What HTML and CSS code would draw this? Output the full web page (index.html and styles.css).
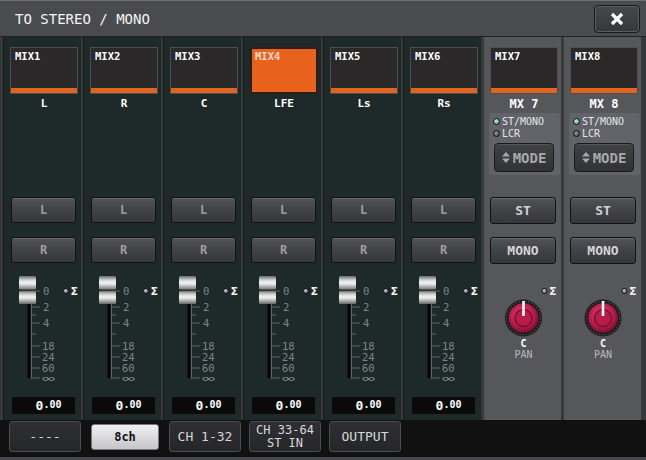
FILE: index.html
```html
<!DOCTYPE html>
<html>
<head>
<meta charset="utf-8">
<link rel="stylesheet" href="styles.css">
</head>
<body>
<svg class="defs" width="0" height="0">
  <defs>
    <linearGradient id="capg" x1="0" y1="0" x2="0" y2="1">
      <stop offset="0" stop-color="#6a6a6a"/>
      <stop offset="0.3" stop-color="#d6d6d6"/>
      <stop offset="0.5" stop-color="#f4f4f4"/>
      <stop offset="0.72" stop-color="#bcbcbc"/>
      <stop offset="1" stop-color="#666"/>
    </linearGradient>
    <radialGradient id="ledg" cx="0.4" cy="0.4" r="0.6">
      <stop offset="0" stop-color="#d8d8d8"/>
      <stop offset="1" stop-color="#4a4a4a"/>
    </radialGradient>
    <radialGradient id="knobg" cx="0.45" cy="0.4" r="0.6">
      <stop offset="0" stop-color="#e4457a"/>
      <stop offset="0.6" stop-color="#c0204f"/>
      <stop offset="1" stop-color="#7c0e2e"/>
    </radialGradient>
  </defs>
</svg>
<div class="screen">
  <div class="titlebar">
    <span class="title">TO STEREO / MONO</span>
    <div class="close"><svg width="14" height="14" viewBox="0 0 14 14"><path d="M2 2L12 12M12 2L2 12" stroke="#fff" stroke-width="3.2"/></svg></div>
  </div>
  <div class="frame">
    <div class="strip">
      <div class="mix"><span class="mix-name">MIX1</span><span class="mix-bar"></span></div>
      <div class="chlabel">L</div>
      <div class="btns"><div class="btn">L</div><div class="btn">R</div></div>
      <svg class="fader" width="78" height="116" viewBox="0 0 78 116">
        <path d="M28.5 21V108M28 37h9M28 53h9M28 76h9M28 87h9M28 98h9M28 108h9M28 45h5M28 64h5M33 21h4" stroke="#5e6767" stroke-width="1" fill="none"/>
        <rect x="24.5" y="34" width="3" height="74" fill="#060606"/>
        <rect x="16" y="6" width="17" height="14" rx="1.5" fill="url(#capg)"/>
        <rect x="16" y="20.5" width="17" height="13.5" rx="1.5" fill="url(#capg)"/>
        <path d="M16 20.2h17" stroke="#2a2a2a" stroke-width="1.2"/>
        <text class="sc" x="40" y="21">0</text><text class="sc" x="40" y="37">2</text><text class="sc" x="40" y="53">4</text>
        <text class="sc" x="39" y="76">18</text><text class="sc" x="39" y="87">24</text><text class="sc" x="39" y="97.5">60</text>
        <text class="sc inf" x="39" y="108.5" textLength="13" lengthAdjust="spacingAndGlyphs">∞</text>
        <circle cx="63" cy="21" r="2.6" fill="url(#ledg)" stroke="#0c0c0c" stroke-width="0.8"/>
        <text class="sig" x="67.5" y="21">Σ</text>
      </svg>
      <div class="value">0<small>.00</small></div>
    </div>
    <div class="strip">
      <div class="mix"><span class="mix-name">MIX2</span><span class="mix-bar"></span></div>
      <div class="chlabel">R</div>
      <div class="btns"><div class="btn">L</div><div class="btn">R</div></div>
      <svg class="fader" width="78" height="116" viewBox="0 0 78 116">
        <path d="M28.5 21V108M28 37h9M28 53h9M28 76h9M28 87h9M28 98h9M28 108h9M28 45h5M28 64h5M33 21h4" stroke="#5e6767" stroke-width="1" fill="none"/>
        <rect x="24.5" y="34" width="3" height="74" fill="#060606"/>
        <rect x="16" y="6" width="17" height="14" rx="1.5" fill="url(#capg)"/>
        <rect x="16" y="20.5" width="17" height="13.5" rx="1.5" fill="url(#capg)"/>
        <path d="M16 20.2h17" stroke="#2a2a2a" stroke-width="1.2"/>
        <text class="sc" x="40" y="21">0</text><text class="sc" x="40" y="37">2</text><text class="sc" x="40" y="53">4</text>
        <text class="sc" x="39" y="76">18</text><text class="sc" x="39" y="87">24</text><text class="sc" x="39" y="97.5">60</text>
        <text class="sc inf" x="39" y="108.5" textLength="13" lengthAdjust="spacingAndGlyphs">∞</text>
        <circle cx="63" cy="21" r="2.6" fill="url(#ledg)" stroke="#0c0c0c" stroke-width="0.8"/>
        <text class="sig" x="67.5" y="21">Σ</text>
      </svg>
      <div class="value">0<small>.00</small></div>
    </div>
    <div class="strip">
      <div class="mix"><span class="mix-name">MIX3</span><span class="mix-bar"></span></div>
      <div class="chlabel">C</div>
      <div class="btns"><div class="btn">L</div><div class="btn">R</div></div>
      <svg class="fader" width="78" height="116" viewBox="0 0 78 116">
        <path d="M28.5 21V108M28 37h9M28 53h9M28 76h9M28 87h9M28 98h9M28 108h9M28 45h5M28 64h5M33 21h4" stroke="#5e6767" stroke-width="1" fill="none"/>
        <rect x="24.5" y="34" width="3" height="74" fill="#060606"/>
        <rect x="16" y="6" width="17" height="14" rx="1.5" fill="url(#capg)"/>
        <rect x="16" y="20.5" width="17" height="13.5" rx="1.5" fill="url(#capg)"/>
        <path d="M16 20.2h17" stroke="#2a2a2a" stroke-width="1.2"/>
        <text class="sc" x="40" y="21">0</text><text class="sc" x="40" y="37">2</text><text class="sc" x="40" y="53">4</text>
        <text class="sc" x="39" y="76">18</text><text class="sc" x="39" y="87">24</text><text class="sc" x="39" y="97.5">60</text>
        <text class="sc inf" x="39" y="108.5" textLength="13" lengthAdjust="spacingAndGlyphs">∞</text>
        <circle cx="63" cy="21" r="2.6" fill="url(#ledg)" stroke="#0c0c0c" stroke-width="0.8"/>
        <text class="sig" x="67.5" y="21">Σ</text>
      </svg>
      <div class="value">0<small>.00</small></div>
    </div>
    <div class="strip">
      <div class="mix on"><span class="mix-name">MIX4</span></div>
      <div class="chlabel">LFE</div>
      <div class="btns"><div class="btn">L</div><div class="btn">R</div></div>
      <svg class="fader" width="78" height="116" viewBox="0 0 78 116">
        <path d="M28.5 21V108M28 37h9M28 53h9M28 76h9M28 87h9M28 98h9M28 108h9M28 45h5M28 64h5M33 21h4" stroke="#5e6767" stroke-width="1" fill="none"/>
        <rect x="24.5" y="34" width="3" height="74" fill="#060606"/>
        <rect x="16" y="6" width="17" height="14" rx="1.5" fill="url(#capg)"/>
        <rect x="16" y="20.5" width="17" height="13.5" rx="1.5" fill="url(#capg)"/>
        <path d="M16 20.2h17" stroke="#2a2a2a" stroke-width="1.2"/>
        <text class="sc" x="40" y="21">0</text><text class="sc" x="40" y="37">2</text><text class="sc" x="40" y="53">4</text>
        <text class="sc" x="39" y="76">18</text><text class="sc" x="39" y="87">24</text><text class="sc" x="39" y="97.5">60</text>
        <text class="sc inf" x="39" y="108.5" textLength="13" lengthAdjust="spacingAndGlyphs">∞</text>
        <circle cx="63" cy="21" r="2.6" fill="url(#ledg)" stroke="#0c0c0c" stroke-width="0.8"/>
        <text class="sig" x="67.5" y="21">Σ</text>
      </svg>
      <div class="value">0<small>.00</small></div>
    </div>
    <div class="strip">
      <div class="mix"><span class="mix-name">MIX5</span><span class="mix-bar"></span></div>
      <div class="chlabel">Ls</div>
      <div class="btns"><div class="btn">L</div><div class="btn">R</div></div>
      <svg class="fader" width="78" height="116" viewBox="0 0 78 116">
        <path d="M28.5 21V108M28 37h9M28 53h9M28 76h9M28 87h9M28 98h9M28 108h9M28 45h5M28 64h5M33 21h4" stroke="#5e6767" stroke-width="1" fill="none"/>
        <rect x="24.5" y="34" width="3" height="74" fill="#060606"/>
        <rect x="16" y="6" width="17" height="14" rx="1.5" fill="url(#capg)"/>
        <rect x="16" y="20.5" width="17" height="13.5" rx="1.5" fill="url(#capg)"/>
        <path d="M16 20.2h17" stroke="#2a2a2a" stroke-width="1.2"/>
        <text class="sc" x="40" y="21">0</text><text class="sc" x="40" y="37">2</text><text class="sc" x="40" y="53">4</text>
        <text class="sc" x="39" y="76">18</text><text class="sc" x="39" y="87">24</text><text class="sc" x="39" y="97.5">60</text>
        <text class="sc inf" x="39" y="108.5" textLength="13" lengthAdjust="spacingAndGlyphs">∞</text>
        <circle cx="63" cy="21" r="2.6" fill="url(#ledg)" stroke="#0c0c0c" stroke-width="0.8"/>
        <text class="sig" x="67.5" y="21">Σ</text>
      </svg>
      <div class="value">0<small>.00</small></div>
    </div>
    <div class="strip">
      <div class="mix"><span class="mix-name">MIX6</span><span class="mix-bar"></span></div>
      <div class="chlabel">Rs</div>
      <div class="btns"><div class="btn">L</div><div class="btn">R</div></div>
      <svg class="fader" width="78" height="116" viewBox="0 0 78 116">
        <path d="M28.5 21V108M28 37h9M28 53h9M28 76h9M28 87h9M28 98h9M28 108h9M28 45h5M28 64h5M33 21h4" stroke="#5e6767" stroke-width="1" fill="none"/>
        <rect x="24.5" y="34" width="3" height="74" fill="#060606"/>
        <rect x="16" y="6" width="17" height="14" rx="1.5" fill="url(#capg)"/>
        <rect x="16" y="20.5" width="17" height="13.5" rx="1.5" fill="url(#capg)"/>
        <path d="M16 20.2h17" stroke="#2a2a2a" stroke-width="1.2"/>
        <text class="sc" x="40" y="21">0</text><text class="sc" x="40" y="37">2</text><text class="sc" x="40" y="53">4</text>
        <text class="sc" x="39" y="76">18</text><text class="sc" x="39" y="87">24</text><text class="sc" x="39" y="97.5">60</text>
        <text class="sc inf" x="39" y="108.5" textLength="13" lengthAdjust="spacingAndGlyphs">∞</text>
        <circle cx="63" cy="21" r="2.6" fill="url(#ledg)" stroke="#0c0c0c" stroke-width="0.8"/>
        <text class="sig" x="67.5" y="21">Σ</text>
      </svg>
      <div class="value">0<small>.00</small></div>
    </div>
    <div class="strip grey">
      <div class="mix"><span class="mix-name">MIX7</span><span class="mix-bar"></span></div>
      <div class="chlabel">MX 7</div>
      <div class="panel">
        <div class="opt"><span class="led green"></span>ST/MONO</div>
        <div class="opt"><span class="led"></span>LCR</div>
        <div class="mode"><svg width="8" height="11" viewBox="0 0 8 11"><path d="M4 0L8 4.5H0ZM4 11L0 6.5H8Z" fill="#a9a9ab"/></svg>MODE</div>
      </div>
      <div class="btns"><div class="btn">ST</div><div class="btn">MONO</div></div>
      <svg class="pan" width="78" height="92" viewBox="0 0 78 92">
        <circle cx="61.5" cy="21" r="2.6" fill="url(#ledg)" stroke="#0c0c0c" stroke-width="0.8"/>
        <text class="sig" x="66" y="21">Σ</text>
        <circle cx="40.5" cy="48" r="18.5" fill="#1b1b1d"/>
        <circle cx="40.5" cy="48" r="16.8" fill="none" stroke="#4a4a4e" stroke-width="1.4" stroke-dasharray="1.6 1.6"/>
        <circle cx="40.5" cy="48" r="14.8" fill="url(#knobg)"/>
        <circle cx="40.5" cy="48" r="8.5" fill="#b71c4a" stroke="#7a0f2d" stroke-width="1.5"/>
        <path d="M40.5 31V46" stroke="#fff" stroke-width="2.6"/>
        <text class="kc" x="40.5" y="73">C</text>
        <text class="kp" x="40.5" y="84">PAN</text>
      </svg>
    </div>
    <div class="strip grey">
      <div class="mix"><span class="mix-name">MIX8</span><span class="mix-bar"></span></div>
      <div class="chlabel">MX 8</div>
      <div class="panel">
        <div class="opt"><span class="led green"></span>ST/MONO</div>
        <div class="opt"><span class="led"></span>LCR</div>
        <div class="mode"><svg width="8" height="11" viewBox="0 0 8 11"><path d="M4 0L8 4.5H0ZM4 11L0 6.5H8Z" fill="#a9a9ab"/></svg>MODE</div>
      </div>
      <div class="btns"><div class="btn">ST</div><div class="btn">MONO</div></div>
      <svg class="pan" width="78" height="92" viewBox="0 0 78 92">
        <circle cx="61.5" cy="21" r="2.6" fill="url(#ledg)" stroke="#0c0c0c" stroke-width="0.8"/>
        <text class="sig" x="66" y="21">Σ</text>
        <circle cx="40" cy="48" r="18.5" fill="#1b1b1d"/>
        <circle cx="40" cy="48" r="16.8" fill="none" stroke="#4a4a4e" stroke-width="1.4" stroke-dasharray="1.6 1.6"/>
        <circle cx="40" cy="48" r="14.8" fill="url(#knobg)"/>
        <circle cx="40" cy="48" r="8.5" fill="#b71c4a" stroke="#7a0f2d" stroke-width="1.5"/>
        <path d="M40 31V46" stroke="#fff" stroke-width="2.6"/>
        <text class="kc" x="40" y="73">C</text>
        <text class="kp" x="40" y="84">PAN</text>
      </svg>
    </div>
  </div>
  <div class="tabs">
    <div class="tab">----</div>
    <div class="tab-slot"><div class="tab sel">8ch</div></div>
    <div class="tab">CH 1-32</div>
    <div class="tab two"><span class="ln">CH 33-64</span><span class="ln">ST IN</span></div>
    <div class="tab">OUTPUT</div>
  </div>
</div>
</body>
</html>
```

FILE: styles.css
```css
html, body {
  margin: 0;
  padding: 0;
  background: #111;
}
body {
  font-family: "DejaVu Sans Mono", "Liberation Mono", monospace;
}
.defs {
  display: block;
  width: 0;
  height: 0;
}
.screen {
  width: 646px;
  height: 460px;
  display: flex;
  flex-direction: column;
  overflow: hidden;
}
.titlebar {
  height: 35px;
  border-top: 1px solid #707175;
  background: #4a4b4f;
  display: flex;
  align-items: center;
  justify-content: space-between;
  padding: 0 6px 0 15px;
}
.title {
  color: #f4f4f4;
  font-size: 14px;
}
.close {
  width: 46px;
  height: 28px;
  box-sizing: border-box;
  border: 1px solid #1a1a1b;
  border-radius: 4px;
  background: linear-gradient(#47484c, #36373a);
  box-shadow: inset 0 0 0 1px #5a5b5f;
  display: flex;
  align-items: center;
  justify-content: center;
}
.frame {
  height: 383px;
  border-top: 1px solid #1f2021;
  background: #36383b;
  display: flex;
  gap: 2px;
  padding: 0 5px 0 3px;
}
.strip {
  flex: 1;
  min-width: 0;
  background: #1e2929;
  display: flex;
  flex-direction: column;
  box-shadow: inset 1px 0 0 #15191a;
}
.strip.grey {
  background: #56575b;
  box-shadow: inset 1px 0 0 #3a3b3e;
}
.mix {
  margin: 10px 0 0 7px;
  width: 68px;
  height: 47px;
  box-sizing: border-box;
  border: 1px solid #4e4c4d;
  background: #2b2829;
  display: flex;
  flex-direction: column;
}
.mix-name {
  color: #fff;
  font-weight: bold;
  font-size: 10.5px;
  line-height: 12px;
  padding: 2px 0 0 4px;
}
.mix-bar {
  margin-top: auto;
  height: 5px;
  background: #e2651f;
}
.mix.on {
  background: #e9621d;
  border: 2px solid #2b1e17;
}
.mix.on .mix-name {
  color: #f7dccb;
  padding: 1px 0 0 3px;
}
.chlabel {
  margin-left: 7px;
  width: 68px;
  height: 18px;
  line-height: 20px;
  text-align: center;
  color: #fff;
  font-weight: bold;
  font-size: 11px;
}
.grey .chlabel {
  font-size: 12px;
}
.btns {
  margin: 85px 0 0 8px;
  width: 65px;
  display: flex;
  flex-direction: column;
  gap: 14px;
}
.grey .btns {
  margin: 22px 0 0 7px;
  width: 66px;
  gap: 13px;
}
.btn {
  height: 26px;
  box-sizing: border-box;
  border: 1px solid #111;
  border-radius: 3px;
  background: linear-gradient(#535457, #404144 55%, #37383b);
  box-shadow: inset 0 1px 0 rgba(255, 255, 255, 0.12);
  color: #9d9d9f;
  font-weight: bold;
  font-size: 12px;
  display: flex;
  align-items: center;
  justify-content: center;
}
.grey .btn {
  height: 27px;
  color: #d4d4d6;
  font-size: 13px;
}
.fader {
  display: block;
  margin-top: 7px;
}
.sc {
  font-family: "DejaVu Sans Mono", monospace;
  font-size: 10.5px;
  fill: #7e8686;
  dominant-baseline: central;
}
.inf {
  font-size: 10px;
}
.sig {
  font-family: "DejaVu Sans", sans-serif;
  font-size: 11px;
  font-weight: bold;
  fill: #f0f0f0;
  dominant-baseline: central;
}
.value {
  margin: 11px 0 0 9px;
  width: 63px;
  height: 17px;
  box-sizing: border-box;
  padding-left: 10px;
  background: #0a0a0a;
  color: #fff;
  font-weight: bold;
  font-size: 13px;
  display: flex;
  align-items: center;
  justify-content: center;
}
.value small {
  font-size: 10px;
  margin-top: -2px;
}
.panel {
  margin: 1px 0 0 6px;
  width: 71px;
  height: 62px;
  box-sizing: border-box;
  padding: 2px 0 0 4px;
  background: #626368;
  border-radius: 3px;
  display: flex;
  flex-direction: column;
}
.opt {
  height: 12px;
  display: flex;
  align-items: center;
  gap: 2px;
  color: #e6e6e8;
  font-size: 10px;
}
.led {
  width: 7px;
  height: 7px;
  border-radius: 50%;
  box-sizing: border-box;
  border: 1px solid #151515;
  background: radial-gradient(circle at 40% 40%, #9a9a9a, #3a3a3a);
}
.led.green {
  background: radial-gradient(circle at 40% 40%, #b8f5cc, #2f9d5c);
}
.mode {
  margin: 4px 0 0 1px;
  width: 60px;
  height: 29px;
  box-sizing: border-box;
  border: 1px solid #1a1a1a;
  border-radius: 4px;
  background: linear-gradient(#414245, #313235);
  box-shadow: inset 0 1px 0 rgba(255, 255, 255, 0.1);
  color: #a9a9ab;
  font-size: 14px;
  font-weight: bold;
  display: flex;
  align-items: center;
  justify-content: center;
  gap: 3px;
}
.pan {
  display: block;
  margin-top: 6px;
}
.kc {
  font-family: "DejaVu Sans Mono", monospace;
  font-size: 10px;
  font-weight: bold;
  fill: #fff;
  text-anchor: middle;
  dominant-baseline: central;
}
.kp {
  font-family: "DejaVu Sans Mono", monospace;
  font-size: 10px;
  fill: #b9b9bd;
  text-anchor: middle;
  dominant-baseline: central;
}
.tabs {
  height: 36px;
  padding: 1px 0 0 9px;
  background: #111;
  border-bottom: 3px solid #48494c;
  display: flex;
  gap: 8px;
  align-items: flex-start;
}
.tab {
  width: 72px;
  height: 31px;
  box-sizing: border-box;
  border: 1px solid #4b4c50;
  border-radius: 3px;
  background: linear-gradient(#2f3033, #252628);
  color: #d8d8da;
  font-size: 13px;
  line-height: 13px;
  text-align: center;
  display: flex;
  align-items: center;
  justify-content: center;
}
.tab.two {
  flex-direction: column;
  font-size: 12px;
  line-height: 12px;
  gap: 1px;
}
.ln {
  display: block;
  height: 12px;
}
.tab-slot {
  width: 72px;
  height: 31px;
  box-sizing: border-box;
  padding: 3px 2px 2px;
}
.tab.sel {
  width: 68px;
  height: 26px;
  border-color: #7a7a7e;
  background: linear-gradient(#efeff2, #c6c6ca);
  color: #111;
  font-weight: bold;
  font-size: 12px;
}
```
